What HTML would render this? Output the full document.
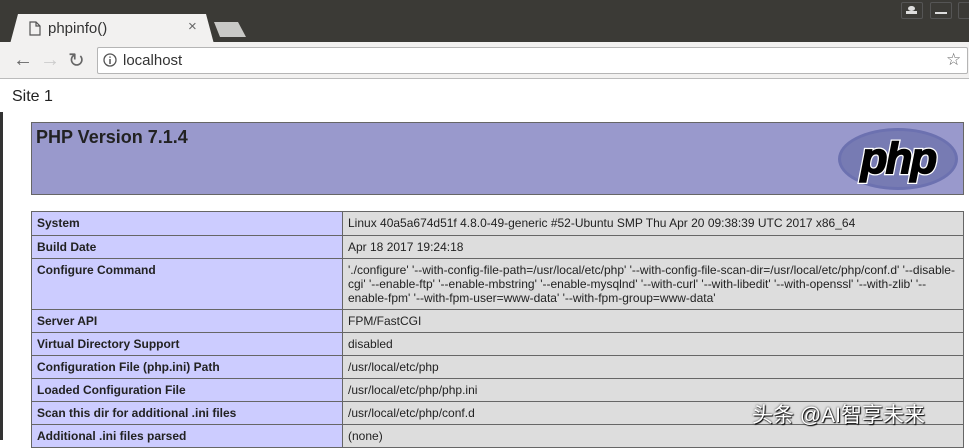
<!DOCTYPE html>
<html><head><meta charset="utf-8"><style>
*{margin:0;padding:0;box-sizing:border-box}
body{width:969px;height:440px;overflow:hidden;background:#fff;font-family:"Liberation Sans",sans-serif;position:relative}
.top{position:absolute;left:0;top:0;width:969px;height:43px;background:#3b3a36}
.tab{position:absolute;left:10px;top:14px;width:204px;height:30px;background:#f2f1f0;clip-path:polygon(8px 0,196px 0,204px 100%,0 100%)}
.tab2{position:absolute;left:214px;top:22px;width:32px;height:15px;background:#c8c8c6;clip-path:polygon(0 0,24px 0,32px 100%,6px 100%)}
.tb{position:absolute;left:0;top:42px;width:969px;height:37px;background:#f2f1f0;border-bottom:1px solid #bbb}
.url{position:absolute;left:97px;top:47px;width:871px;height:27px;background:#fff;border:1px solid #b5b5b5;border-radius:2px}
.wb{position:absolute;top:2px;height:17px;border:1px solid #555;border-radius:2px}
td{border:1px solid #666;font-size:12px;padding:4px 5px 3px;vertical-align:top;color:#222}
td.e{background:#ccf;font-weight:bold;width:311px}
td.v{background:#ddd}
</style></head><body>
<div class="top"></div>
<div class="tab"></div><div class="tab2"></div>
<svg style="position:absolute;left:29px;top:21px" width="12" height="15"><path d="M1 1h6l4 4v9H1z M7 1v4h4" fill="none" stroke="#555" stroke-width="1.2"/></svg>
<div style="position:absolute;left:48px;top:20px;font-size:15px;color:#333">phpinfo()</div>
<div style="position:absolute;left:188px;top:18px;font-size:15px;color:#666">×</div>
<div class="wb" style="left:901px;width:22px"></div><div class="wb" style="left:930px;width:22px"></div><div class="wb" style="left:958px;width:20px"></div>
<div style="position:absolute;left:908px;top:6px;width:7px;height:5px;border-radius:50%;background:#ddd"></div>
<div style="position:absolute;left:906px;top:11px;width:11px;height:3px;background:#ddd"></div>
<div style="position:absolute;left:935px;top:12px;width:12px;height:2px;background:#ddd"></div>
<div class="tb"></div>
<div style="position:absolute;left:13px;top:49px;font-size:20px;color:#666">←</div>
<div style="position:absolute;left:40px;top:49px;font-size:20px;color:#ccc">→</div>
<div style="position:absolute;left:68px;top:48px;font-size:20px;color:#666">↻</div>
<div class="url"></div>
<svg style="position:absolute;left:103px;top:53px" width="14" height="14"><circle cx="7" cy="7" r="6" fill="none" stroke="#555" stroke-width="1.3"/><path d="M7 6v5M7 3.5v1.3" stroke="#555" stroke-width="1.5"/></svg>
<div style="position:absolute;left:123px;top:52px;font-size:15px;color:#333">localhost</div>
<div style="position:absolute;left:946px;top:50px;font-size:17px;color:#666">☆</div>
<div style="position:absolute;left:12px;top:88px;font-size:16px;color:#222">Site 1</div>
<div style="position:absolute;left:0;top:112px;width:3px;height:328px;background:#333"></div>
<div style="position:absolute;left:31px;top:122px;width:933px;height:73px;background:#99c;border:1px solid #666"></div>
<div style="position:absolute;left:36px;top:127px;font-size:18px;font-weight:bold;color:#222">PHP Version 7.1.4</div>
<svg style="position:absolute;left:836px;top:127px" width="124" height="64"><ellipse cx="62" cy="32" rx="60" ry="31" fill="#6c71b0"/><ellipse cx="62" cy="32" rx="57" ry="28" fill="#777bb3"/><text x="62" y="46" text-anchor="middle" font-family="Liberation Sans" font-style="italic" font-weight="bold" font-size="44" fill="none" stroke="#fff" stroke-width="4" letter-spacing="-2">php</text><text x="62" y="46" text-anchor="middle" font-family="Liberation Sans" font-style="italic" font-weight="bold" font-size="44" fill="#000" stroke="#000" stroke-width="1.5" letter-spacing="-2">php</text></svg>
<table style="position:absolute;left:31px;top:211px;width:933px;border-collapse:collapse">
<tr style="height:24px"><td class="e">System</td><td class="v">Linux 40a5a674d51f 4.8.0-49-generic #52-Ubuntu SMP Thu Apr 20 09:38:39 UTC 2017 x86_64</td></tr>
<tr style="height:23px"><td class="e">Build Date</td><td class="v">Apr 18 2017 19:24:18</td></tr>
<tr style="height:51px"><td class="e">Configure Command</td><td class="v">'./configure' '--with-config-file-path=/usr/local/etc/php' '--with-config-file-scan-dir=/usr/local/etc/php/conf.d' '--disable-cgi' '--enable-ftp' '--enable-mbstring' '--enable-mysqlnd' '--with-curl' '--with-libedit' '--with-openssl' '--with-zlib' '--enable-fpm' '--with-fpm-user=www-data' '--with-fpm-group=www-data'</td></tr>
<tr style="height:23px"><td class="e">Server API</td><td class="v">FPM/FastCGI</td></tr>
<tr style="height:23px"><td class="e">Virtual Directory Support</td><td class="v">disabled</td></tr>
<tr style="height:23px"><td class="e">Configuration File (php.ini) Path</td><td class="v">/usr/local/etc/php</td></tr>
<tr style="height:23px"><td class="e">Loaded Configuration File</td><td class="v">/usr/local/etc/php/php.ini</td></tr>
<tr style="height:23px"><td class="e">Scan this dir for additional .ini files</td><td class="v">/usr/local/etc/php/conf.d</td></tr>
<tr style="height:23px"><td class="e">Additional .ini files parsed</td><td class="v">(none)</td></tr>
</table>
<div style="position:absolute;left:752px;top:399px;font-size:21px;color:#fff;font-family:'Liberation Sans','Noto Sans CJK SC',sans-serif;text-shadow:1px 1px 1px #000,0 0 2px #333">头条 @AI智享未来</div>
</body></html>
